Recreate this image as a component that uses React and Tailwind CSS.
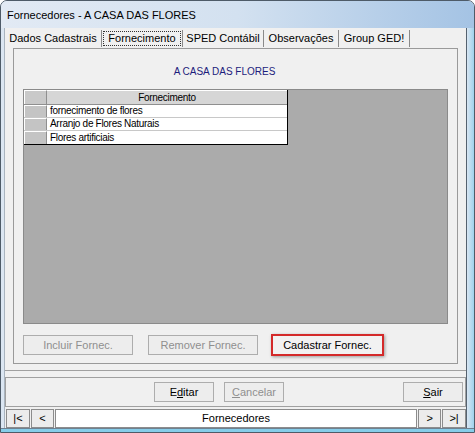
import React from "react";

const tabs = [
  { label: "Dados Cadastrais", w: "w-[97px]" },
  { label: "Fornecimento", w: "w-[81px]", active: true },
  { label: "SPED Contábil", w: "w-[81px]" },
  { label: "Observações", w: "w-[75px]" },
  { label: "Group GED!", w: "w-[71px]" },
];

const rows = ["fornecimento de flores", "Arranjo de Flores Naturais", "Flores artificiais"];

const Btn = ({ children, className = "", disabled }) => (
  <div
    className={`flex items-center justify-center h-[20px] border border-[#adadad] bg-[#ededed] text-[11px] ${disabled ? "text-[#8f8f8f]" : "text-black"} ${className}`}
  >
    {children}
  </div>
);

const NavBtn = ({ children, className = "" }) => (
  <div className={`flex items-center justify-center h-[19px] border border-[#8c8c8c] bg-[#ececec] text-[11px] ${className}`}>
    {children}
  </div>
);

export default function App() {
  return (
    <div className="w-[475px] h-[433px] overflow-hidden bg-white font-['Liberation_Sans',Arial,sans-serif] text-black">
      <div className="w-[475px] h-[433px] flex flex-col rounded-t-[7px] border border-[#4e5b68] overflow-hidden bg-[#d6e4f2]">
        {/* title bar */}
        <div className="h-[27px] shrink-0 flex items-center pl-[6px] pt-[1px] bg-gradient-to-r from-[#e2eaf4] via-[#d3e1f0] to-[#a4c3e4] text-[11px]">
          Fornecedores - A CASA DAS FLORES
        </div>

        <div className="flex flex-1 min-h-0">
          <div className="w-[3px] bg-[#dbe6f2]" />

          {/* client area */}
          <div className="w-[462px] bg-[#f0f0f0] flex flex-col border-l border-[#a9b4bf]">
            {/* tabs */}
            <div className="h-[20px] flex items-center text-[11px]">
              {tabs.map((t) => (
                <div key={t.label} className={`${t.w} h-[17px] flex items-center border-r border-[#8a8a8a]`}>
                  {t.active ? (
                    <div className="mx-[1px] w-full h-[15px] flex items-center justify-center border border-dotted border-[#333]">
                      {t.label}
                    </div>
                  ) : (
                    <div className="w-full text-center">{t.label}</div>
                  )}
                </div>
              ))}
            </div>

            {/* tab page */}
            <div className="ml-[8px] w-[445px] h-[316px] border border-[#9a9a9a] flex flex-col">
              <div className="h-[40px] flex items-center justify-center pt-[5px] pr-[22px] text-[10px] text-[#1c1c7c]">
                A CASA DAS FLORES
              </div>
              {/* grid */}
              <div className="ml-[9px] w-[425px] h-[235px] bg-[#ababab] border border-[#8a8a8a] text-[10px] tracking-[-0.3px]">
                <div className="w-[264px] border-r border-b border-black bg-white">
                  <div className="flex h-[15px] bg-[#d6d6d6] border-b border-[#8f8f8f]">
                    <div className="w-[23px] border-r border-[#8f8f8f] bg-[#c9c9c9] border-l border-t border-l-white border-t-white" />
                    <div className="flex-1 flex items-center justify-center border-t border-white">Fornecimento</div>
                  </div>
                  {rows.map((r) => (
                    <div key={r} className="flex h-[13px] border-b border-[#c8c8c8] last:border-b-0">
                      <div className="w-[23px] bg-[#c4c4c4] border-r border-[#8f8f8f] border-l border-t border-l-white border-t-white" />
                      <div className="flex-1 flex items-center pl-[3px] leading-none">{r}</div>
                    </div>
                  ))}
                </div>
              </div>
              {/* buttons */}
              <div className="flex items-center ml-[9px] mt-[10px] h-[22px]">
                <Btn disabled className="w-[110px]">Incluir Fornec.</Btn>
                <Btn disabled className="w-[110px] ml-[15px]">Remover Fornec.</Btn>
                <div className="ml-[13px] w-[113px] h-[22px] border-2 border-[#d42a2a] shadow-[1px_1px_3px_rgba(0,0,0,0.35)] flex">
                  <div className="flex-1 flex items-center justify-center bg-[#f2f2f2] text-[11px]">Cadastrar Fornec.</div>
                </div>
              </div>
            </div>

            <div className="mt-[6px] h-[1px] bg-[#a0a0a0]" />

            {/* toolbar */}
            <div className="mt-[6px] h-[30px] border border-[#a0a0a0] flex items-center">
              <Btn className="ml-[148px] w-[60px]">
                <span>
                  E<span className="underline">d</span>itar
                </span>
              </Btn>
              <Btn disabled className="ml-[10px] w-[60px]">
                <span>
                  <span className="underline">C</span>ancelar
                </span>
              </Btn>
              <Btn className="ml-[119px] w-[60px]">
                <span>
                  <span className="underline">S</span>air
                </span>
              </Btn>
            </div>

            {/* navigator */}
            <div className="mt-[2px] h-[19px] flex items-center pl-[1px] gap-[1px]">
              <NavBtn className="w-[24px]">|&lt;</NavBtn>
              <NavBtn className="w-[23px]">&lt;</NavBtn>
              <div className="w-[364px] h-[19px] bg-white border border-[#8c8c8c] flex items-center justify-center text-[11px]">
                Fornecedores
              </div>
              <NavBtn className="w-[23px]">&gt;</NavBtn>
              <NavBtn className="w-[24px]">&gt;|</NavBtn>
            </div>
          </div>

          {/* right frame */}
          <div className="flex-1 border-l border-[#55626f] bg-gradient-to-r from-[#d9e6f3] to-[#9fd2ec]" />
        </div>

        <div className="h-[4px] shrink-0 border-t border-[#6f8090] bg-[#86cde9]" />
      </div>
    </div>
  );
}
